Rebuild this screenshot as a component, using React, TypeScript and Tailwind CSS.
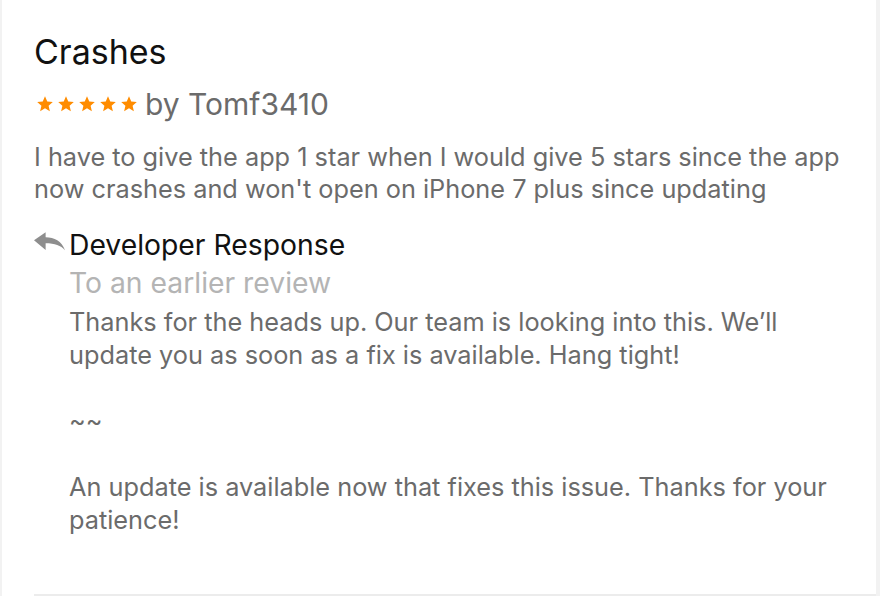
import React from 'react';

function Star() {
  return (
    <svg viewBox="0 0 24 24" className="h-[18px] w-[18px]" fill="#ff8c00">
      <path d="M12 1.8l3 6.9 7.4.6-5.6 4.9 1.7 7.3L12 17.6l-6.5 3.9 1.7-7.3L1.6 9.3 9 8.7z" />
    </svg>
  );
}

function ReplyArrow() {
  return (
    <svg viewBox="0 0 32 20" className="h-[20px] w-[31px]" fill="#8e8e8e">
      <path d="M0 8.2L12 0v5.2c9 0 16.5 4 20 13.3-4.3-5-10.5-7.2-20-7.2v6.9z" />
    </svg>
  );
}

export default function App() {
  return (
    <div className="h-[596px] w-[880px] bg-[#f2f2f2] pl-[2px] pr-[4px]" style={{ fontFamily: 'Inter, "Liberation Sans", sans-serif' }}>
      <div className="flex h-full flex-col bg-white">
        <div className="flex-1 pl-[32px] pr-[22px] pt-[32px]">
          <h1 className="text-[34px] leading-[40px] text-[#111]">Crashes</h1>
          <div className="mt-[12px] flex h-[40px] items-center gap-[7px]">
            <div className="flex gap-[3px] pl-[2px]">
              <Star />
              <Star />
              <Star />
              <Star />
              <Star />
            </div>
            <span className="text-[30px] leading-[40px] text-[#6b6b6b]">by Tomf3410</span>
          </div>
          <p className="mt-[17px] text-[25.3px] leading-[32px] text-[#6b6b6b]">
            I have to give the app 1 star when I would give 5 stars since the app now crashes and won't open on iPhone 7 plus since updating
          </p>
          <div className="mt-[21px] flex">
            <div className="w-[35px] pt-[6px]">
              <ReplyArrow />
            </div>
            <div className="flex-1">
              <div className="text-[28.3px] leading-[38px] text-[#111]">Developer Response</div>
              <div className="text-[28.3px] leading-[38px] text-[#b4b4b4]">To an earlier review</div>
              <div className="mt-[3px] text-[25.3px] leading-[33px] text-[#6b6b6b]">
                <p>Thanks for the heads up. Our team is looking into this. We’ll update you as soon as a fix is available. Hang tight!</p>
                <p className="mt-[33px]">~~</p>
                <p className="mt-[33px]">An update is available now that fixes this issue. Thanks for your patience!</p>
              </div>
            </div>
          </div>
        </div>
        <div className="ml-[32px] h-[2px] bg-[#ececec]" />
      </div>
    </div>
  );
}
